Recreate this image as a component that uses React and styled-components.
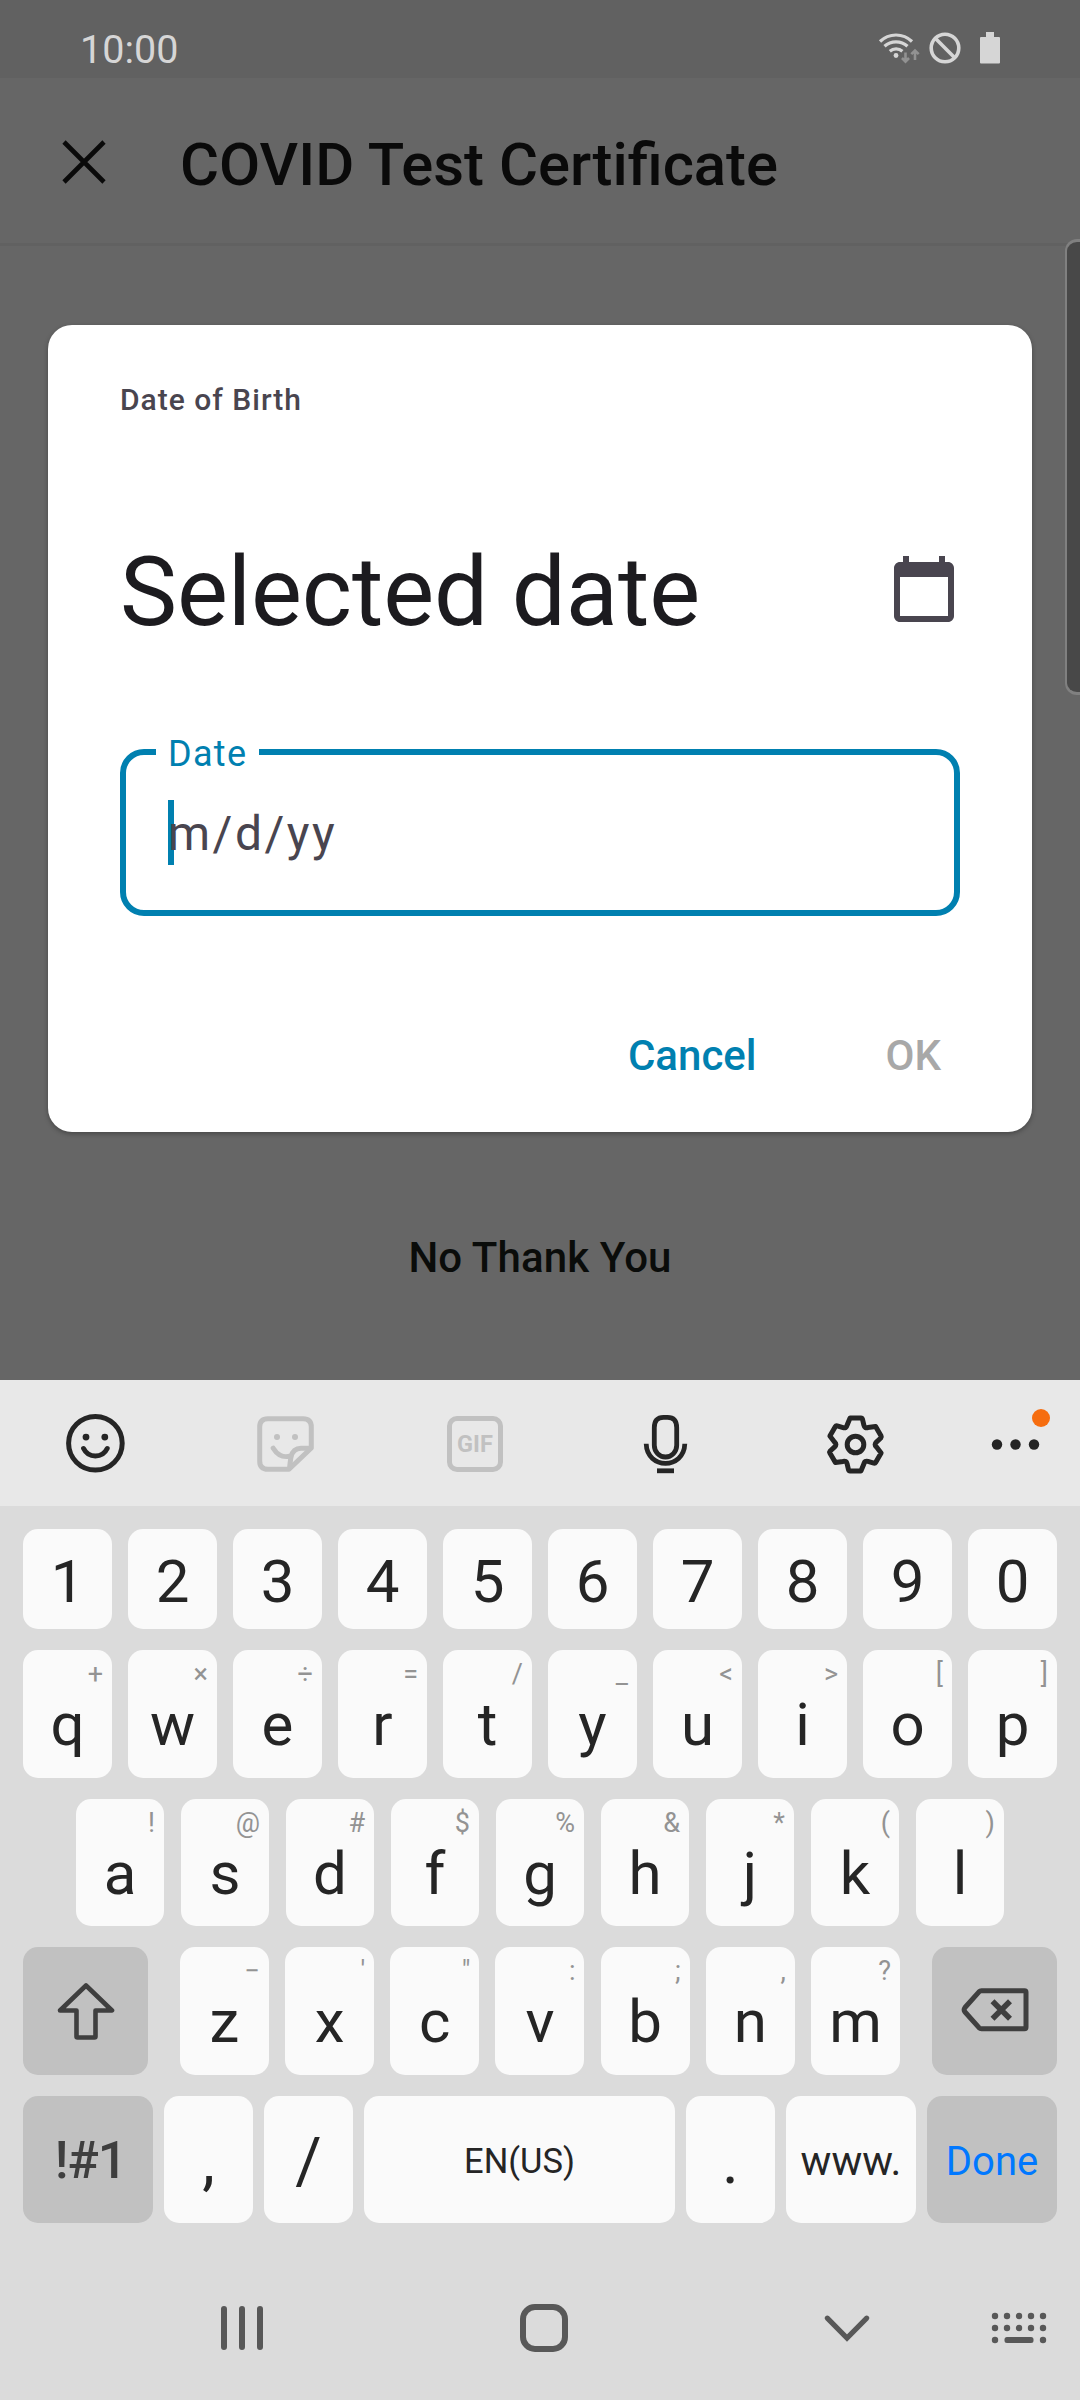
import React from "react";
import styled, { createGlobalStyle } from "styled-components";

const GlobalStyle = createGlobalStyle`
  *, *::before, *::after { box-sizing: border-box; }
  html, body { margin: 0; padding: 0; }
  body {
    background: #dbdbdb;
    font-family: Roboto, "Liberation Sans", sans-serif;
  }
  svg { display: block; flex: none; }
`;

const Phone = styled.div`
  width: 1080px;
  height: 2400px;
  display: flex;
  flex-direction: column;
  overflow: hidden;
`;

const AppArea = styled.div`
  position: relative;
  height: 1380px;
  flex: none;
  display: flex;
  flex-direction: column;
  background: #666666;
`;

const StatusBar = styled.div`
  height: 78px;
  flex: none;
  padding: 20px 80px 0 80px;
  display: flex;
  align-items: center;
  justify-content: space-between;
  background: #616161;
`;

const Clock = styled.div`
  padding-top: 2px;
  font-size: 39.5px;
  line-height: 48px;
  color: #d6d6d6;
`;

const StatusIcons = styled.div`
  display: flex;
  align-items: center;
  margin-top: -3px;
`;

const BlockGap = styled.span`
  margin: 0 18px 0 8px;
`;

const Header = styled.header`
  height: 168px;
  flex: none;
  display: flex;
  align-items: center;
  padding: 3px 0 0 59px;
  border-bottom: 3px solid #616161;
`;

const Title = styled.h1`
  margin: 0 0 0 71px;
  padding-top: 5px;
  font-size: 60px;
  line-height: 70px;
  font-weight: 500;
  font-size: 59.8px;
  color: #0a0a0a;
`;

const EdgePanel = styled.div`
  position: absolute;
  right: 0;
  top: 239px;
  width: 15px;
  height: 456px;
  border: 2px solid #808080;
  border-width: 3px 0 3px 2px;
  border-radius: 12px 0 0 12px;
  background: #484848;
`;

const Dialog = styled.section`
  width: 984px;
  height: 807px;
  margin: 79px 0 0 48px;
  flex: none;
  padding: 56px 72px 0;
  display: flex;
  flex-direction: column;
  border-radius: 24px;
  background: #ffffff;
  box-shadow: 0 2px 5px rgba(0, 0, 0, 0.3);
`;

const Overline = styled.div`
  font-size: 30px;
  line-height: 37px;
  font-weight: 500;
  letter-spacing: 1px;
  color: #49454f;
`;

const HeadlineRow = styled.div`
  height: 112px;
  margin-top: 115px;
  display: flex;
  align-items: center;
  justify-content: space-between;
`;

const Headline = styled.h2`
  margin: 0;
  padding-top: 6px;
  font-size: 96px;
  line-height: 106px;
  font-weight: 400;
  letter-spacing: -0.1px;
  color: #1c1b1f;
`;

const Field = styled.div`
  position: relative;
  height: 167px;
  margin-top: 104px;
  padding-left: 42px;
  display: flex;
  align-items: center;
  border: 6px solid #0080b0;
  border-radius: 24px;
`;

const FieldLabel = styled.label`
  position: absolute;
  left: 30px;
  top: -22px;
  padding: 0 12px;
  font-size: 36px;
  line-height: 42px;
  letter-spacing: 1.3px;
  color: #0080b0;
  background: #ffffff;
`;

const FieldInner = styled.div`
  display: flex;
  align-items: center;
`;

const Caret = styled.span`
  width: 6px;
  height: 65px;
  margin-right: -6px;
  background: #0080b0;
`;

const Placeholder = styled.span`
  position: relative;
  padding-top: 3px;
  font-size: 48px;
  line-height: 60px;
  letter-spacing: 2.5px;
  color: #49454f;
`;

const Actions = styled.div`
  margin-top: 116px;
  height: 48px;
  display: flex;
  justify-content: flex-end;
  gap: 129px;
  padding-right: 19px;
`;

const TextButton = styled.button`
  border: 0;
  padding: 0;
  background: none;
  font-family: inherit;
  font-size: 42px;
  line-height: 48px;
  font-weight: 500;
  color: ${(p) => (p.disabled ? "#a8a8a8" : "#0080b0")};
`;

const Decline = styled.button`
  margin-top: 101px;
  border: 0;
  padding: 0;
  background: none;
  font-family: inherit;
  font-size: 42px;
  line-height: 50px;
  font-weight: 500;
  letter-spacing: 0.1px;
  color: #0a0c0a;
`;

const Toolbar = styled.div`
  height: 126px;
  flex: none;
  display: grid;
  grid-template-columns: repeat(5, 190px) 1fr;
  align-items: center;
  justify-items: center;
  background: #e8e8e8;
`;

const Keys = styled.div`
  flex: none;
  padding: 23px 23px 0;
  display: flex;
  flex-direction: column;
  gap: 21px;
  background: #dbdbdb;
`;

const KeyRow = styled.div`
  height: ${(p) => p.$height}px;
  display: flex;
  justify-content: ${(p) => (p.$spread ? "space-between" : "center")};
  gap: ${(p) => p.$gap ?? 16}px;
`;

const KeyGroup = styled.div`
  width: 720px;
  display: flex;
  justify-content: space-between;
`;

const Key = styled.div`
  position: relative;
  width: ${(p) => p.$width || 89}px;
  height: 100%;
  flex: none;
  display: flex;
  align-items: center;
  justify-content: center;
  padding-top: ${(p) => p.$drop || 0}px;
  border-radius: 15px;
  background: ${(p) => (p.$dark ? "#c1c1c1" : "#fafafa")};
  color: ${(p) => p.$color || "#252525"};
  font-size: ${(p) => p.$size || 60}px;
  font-weight: ${(p) => p.$weight || 400};
  line-height: 70px;
`;

const SymbolsKey = styled(Key)`
  padding-left: 5px;
  letter-spacing: -1px;
`;

const Hint = styled.span`
  position: absolute;
  top: 7px;
  right: 9px;
  font-size: 27px;
  line-height: 34px;
  color: #939393;
`;

const NavBar = styled.nav`
  flex: 1;
  padding: 33px 0 0 91px;
  display: grid;
  grid-template-columns: 302px 302px 304px 40px;
  align-items: center;
  justify-items: center;
  background: #dbdbdb;
`;

const WifiIcon = () => (
  <svg width="42" height="34" viewBox="878 30 42 34" fill="none" stroke="#d6d6d6" strokeWidth="3.2">
    <path d="M880 40.5a23 23 0 0 1 32 0" />
    <path d="M884.5 45.3a17 17 0 0 1 23 0" />
    <path d="M889.8 50.3a9.5 9.5 0 0 1 12.6 0" />
    <circle cx="896" cy="54.5" r="2.4" fill="#d6d6d6" stroke="none" />
    <path d="M905.5 51.5v9M902 57l3.5 3.7 3.5-3.7M915 59v-9.5M911.3 53.2l3.7-3.7 3.7 3.7" stroke="#929292" strokeWidth="2.6" />
  </svg>
);

const BlockIcon = () => (
  <svg width="34" height="34" viewBox="0 0 34 34" fill="none" stroke="#d6d6d6" strokeWidth="3.6">
    <circle cx="17" cy="17" r="13.8" />
    <path d="M7.3 7.3l19.4 19.4" />
  </svg>
);

const BatteryIcon = () => (
  <svg width="20" height="32" viewBox="0 0 20 32" fill="#d6d6d6">
    <path d="M6 0h8v5h5q1 0 1 1v24.5q0 1-1 1H1q-1 0-1-1V6q0-1 1-1h5z" />
  </svg>
);

const CloseIcon = () => (
  <svg width="50" height="50" viewBox="0 0 50 50" stroke="#0a0a0a" strokeWidth="4.6">
    <path d="M5 5l40 40M45 5L5 45" />
  </svg>
);

const CalendarIcon = () => (
  <svg width="72" height="72" viewBox="0 0 24 24" fill="#49454f">
    <path d="M20 3h-1V1h-2v2H7V1H5v2H4c-1.1 0-2 .9-2 2v16c0 1.1.9 2 2 2h16c1.1 0 2-.9 2-2V5c0-1.1-.9-2-2-2zm0 18H4V8h16v13z" />
  </svg>
);

const EmojiIcon = () => (
  <svg width="64" height="64" viewBox="-32.4 -32.3 64 64" fill="none" stroke="#252525" strokeWidth="5">
    <circle r="26.8" />
    <circle cx="-9.4" cy="-6.2" r="3.4" fill="#252525" stroke="none" />
    <circle cx="9.4" cy="-6.2" r="3.4" fill="#252525" stroke="none" />
    <path d="M-11.8 5.2C-7 15.2 7 15.2 11.8 5.2" strokeLinecap="round" />
  </svg>
);

const StickerIcon = () => (
  <svg width="64" height="64" viewBox="253 1411 64 64" fill="none" stroke="#c1c1c1" strokeWidth="5" strokeLinejoin="round">
    <path d="M289 1469.3H268q-8.300 0-8.300-8.300v-34q0-8.300 8.300-8.300h35q8.300 0 8.300 8.300v21z" />
    <path d="M289.5 1468.5q1-9 1.500-11.500 2-8.700 10-8.700h10" />
    <path d="M273.2 1448.2c4.500 7.300 9.500 9.800 17.500 7.800" strokeLinecap="round" />
    <circle cx="277" cy="1437" r="3" fill="#c1c1c1" stroke="none" />
    <circle cx="295" cy="1437" r="3" fill="#c1c1c1" stroke="none" />
  </svg>
);

const GifBadge = styled.div`
  width: 56px;
  height: 56px;
  margin-top: 1px;
  display: flex;
  align-items: center;
  justify-content: center;
  border: 5px solid #c1c1c1;
  border-radius: 10px;
  color: #c1c1c1;
  font-size: 23.5px;
  font-weight: 700;
  line-height: 28px;
`;

const MicIcon = () => (
  <svg width="50" height="64" viewBox="-25.5 -32.3 50 64" fill="none" stroke="#252525" strokeWidth="4.8">
    <path d="M-11.2 -15.5Q-11.2 -26 -2 -26H2Q11.2 -26 11.2 -15.5V2A11.2 11.7 0 0 1 -11.2 2Z" />
    <path d="M-19.3 0.5C-18.5 26.5 18.5 26.5 19.3 0.5" />
    <path d="M-8.5 27.5H8.500" />
  </svg>
);

const rotate = ([x, y], deg) => {
  const a = (deg * Math.PI) / 180;
  const px = x * Math.cos(a) - y * Math.sin(a);
  const py = x * Math.sin(a) + y * Math.cos(a);
  return `${px.toFixed(2)} ${py.toFixed(2)}`;
};

const gearPath =
  [0, 60, 120, 180, 240, 300]
    .map((deg, i) => {
      const r = (x, y) => rotate([x, y], deg);
      return `${i === 0 ? "M" : "L"}${r(-5.5, -26.4)}L${r(5.5, -26.4)}Q${r(6.6, -26.4)} ${r(7, -25.2)}L${r(8.4, -19.2)}Q${r(9.2, -15.9)} ${r(12.4, -16.9)}`;
    })
    .join("") + "Z";

const GearIcon = () => (
  <svg width="64" height="64" viewBox="-32.5 -33.5 64 64" fill="none" stroke="#252525" strokeWidth="5" strokeLinejoin="round">
    <path d={gearPath} />
    <circle r="8.3" />
  </svg>
);

const MoreIcon = () => (
  <svg width="80" height="80" viewBox="975 1403 80 80" fill="#252525">
    <circle cx="997" cy="1444.5" r="5.2" />
    <circle cx="1015.5" cy="1444.5" r="5.2" />
    <circle cx="1034" cy="1444.5" r="5.2" />
    <circle cx="1041" cy="1418" r="9" fill="#f66d0f" />
  </svg>
);

const ShiftIcon = () => (
  <svg width="64" height="64" viewBox="53.5 1979 64 64" fill="none" stroke="#3f3f3f" strokeWidth="4.6" strokeLinejoin="round">
    <path d="M85.5 1985.5L111.5 2010.5H95V2036.5Q95 2037.5 94 2037.5H77Q76 2037.5 76 2036.5V2010.5H59.5Z" />
  </svg>
);

const BackspaceIcon = () => (
  <svg width="72" height="50" viewBox="958.5 1986 72 50" fill="none" stroke="#3f3f3f" strokeWidth="5" strokeLinejoin="round">
    <path d="M981 1990.8H1024Q1025.5 1990.8 1025.5 1992.3V2027.2Q1025.5 2028.7 1024 2028.7H981Q979.5 2028.7 978.5 2027.7L964.5 2012Q962.8 2009.75 964.5 2007.5L978.5 1991.8Q979.5 1990.8 981 1990.8Z" />
    <path d="M992 2001.2L1009.5 2018.7M1009.5 2001.2L992 2018.7" strokeWidth="5.6" />
  </svg>
);

const RecentsIcon = () => (
  <svg width="48" height="52" viewBox="218 2302 48 52" stroke="#585858" strokeWidth="6" strokeLinecap="round">
    <path d="M224 2309V2347M242 2309V2347M260 2309V2347" />
  </svg>
);

const HomeIcon = () => (
  <svg width="52" height="52" viewBox="-26 -26 52 52" fill="none" stroke="#585858" strokeWidth="6">
    <rect x="-21" y="-21" width="42" height="42" rx="12" />
  </svg>
);

const HideIcon = () => (
  <svg width="52" height="40" viewBox="821 2308 52 40" fill="none" stroke="#585858" strokeWidth="5.2" strokeLinecap="round">
    <path d="M827.3 2318.2L847 2338L866.7 2318.2" />
  </svg>
);

const KeyboardIcon = () => (
  <svg width="60" height="40" viewBox="989 2308 60 40" fill="#585858">
    {[2316, 2328].map((y) =>
      [995, 1007, 1019, 1031, 1043].map((x) => <circle key={`${x}-${y}`} cx={x} cy={y} r="3.2" />)
    )}
    <circle cx="995" cy="2340" r="3.2" />
    <circle cx="1043" cy="2340" r="3.2" />
    <rect x="1004.5" y="2337" width="29" height="6" rx="2.5" />
  </svg>
);

const digits = "1234567890".split("");
const topLetters = [
  ["q", "+"], ["w", "×"], ["e", "÷"], ["r", "="], ["t", "/"],
  ["y", "_"], ["u", "<"], ["i", ">"], ["o", "["], ["p", "]"],
];
const homeLetters = [
  ["a", "!"], ["s", "@"], ["d", "#"], ["f", "$"], ["g", "%"],
  ["h", "&"], ["j", "*"], ["k", "("], ["l", ")"],
];
const bottomLetters = [
  ["z", "−"], ["x", "'"], ["c", "\""], ["v", ":"], ["b", ";"], ["n", ","], ["m", "?"],
];

const LetterKey = ({ letter, hint, width, drop = 21 }) => (
  <Key $drop={drop} $width={width}>
    <Hint>{hint}</Hint>
    {letter}
  </Key>
);

export default function App() {
  return (
    <>
      <GlobalStyle />
      <Phone>
        <AppArea>
          <StatusBar>
            <Clock>10:00</Clock>
            <StatusIcons>
              <WifiIcon />
              <BlockGap><BlockIcon /></BlockGap>
              <BatteryIcon />
            </StatusIcons>
          </StatusBar>
          <Header>
            <CloseIcon />
            <Title>COVID Test Certificate</Title>
          </Header>
          <Dialog>
            <Overline>Date of Birth</Overline>
            <HeadlineRow>
              <Headline>Selected date</Headline>
              <CalendarIcon />
            </HeadlineRow>
            <Field>
              <FieldLabel>Date</FieldLabel>
              <FieldInner>
                <Caret />
                <Placeholder>m/d/yy</Placeholder>
              </FieldInner>
            </Field>
            <Actions>
              <TextButton>Cancel</TextButton>
              <TextButton disabled>OK</TextButton>
            </Actions>
          </Dialog>
          <Decline>No Thank You</Decline>
          <EdgePanel />
        </AppArea>

        <Toolbar>
          <EmojiIcon />
          <StickerIcon />
          <GifBadge>GIF</GifBadge>
          <MicIcon />
          <GearIcon />
          <MoreIcon />
        </Toolbar>

        <Keys>
          <KeyRow $height={100}>
            {digits.map((d) => (
              <Key key={d} $drop={6}>{d}</Key>
            ))}
          </KeyRow>
          <KeyRow $height={128}>
            {topLetters.map(([letter, hint]) => (
              <LetterKey key={letter} letter={letter} hint={hint} />
            ))}
          </KeyRow>
          <KeyRow $height={127} $gap={17}>
            {homeLetters.map(([letter, hint]) => (
              <LetterKey key={letter} letter={letter} hint={hint} width={88} drop={23} />
            ))}
          </KeyRow>
          <KeyRow $height={128} $spread>
            <Key $width={125} $dark><ShiftIcon /></Key>
            <KeyGroup>
              {bottomLetters.map(([letter, hint]) => (
                <LetterKey key={letter} letter={letter} hint={hint} />
              ))}
            </KeyGroup>
            <Key $width={125} $dark><BackspaceIcon /></Key>
          </KeyRow>
          <KeyRow $height={127} $gap={11} $spread>
            <SymbolsKey $width={130} $dark $size={52} $weight={500} $drop={2} $color="#3f3f3f">!#1</SymbolsKey>
            <Key $size={64} $drop={4}>,</Key>
            <Key $size={64} $drop={4}>/</Key>
            <Key $width={311} $size={34.5} $drop={2}>EN(US)</Key>
            <Key $size={64} $drop={4}>.</Key>
            <Key $width={130} $size={41} $drop={2}>www.</Key>
            <Key $width={130} $dark $size={40} $drop={4} $color="#0078ff">Done</Key>
          </KeyRow>
        </Keys>

        <NavBar>
          <RecentsIcon />
          <HomeIcon />
          <HideIcon />
          <KeyboardIcon />
        </NavBar>
      </Phone>
    </>
  );
}
